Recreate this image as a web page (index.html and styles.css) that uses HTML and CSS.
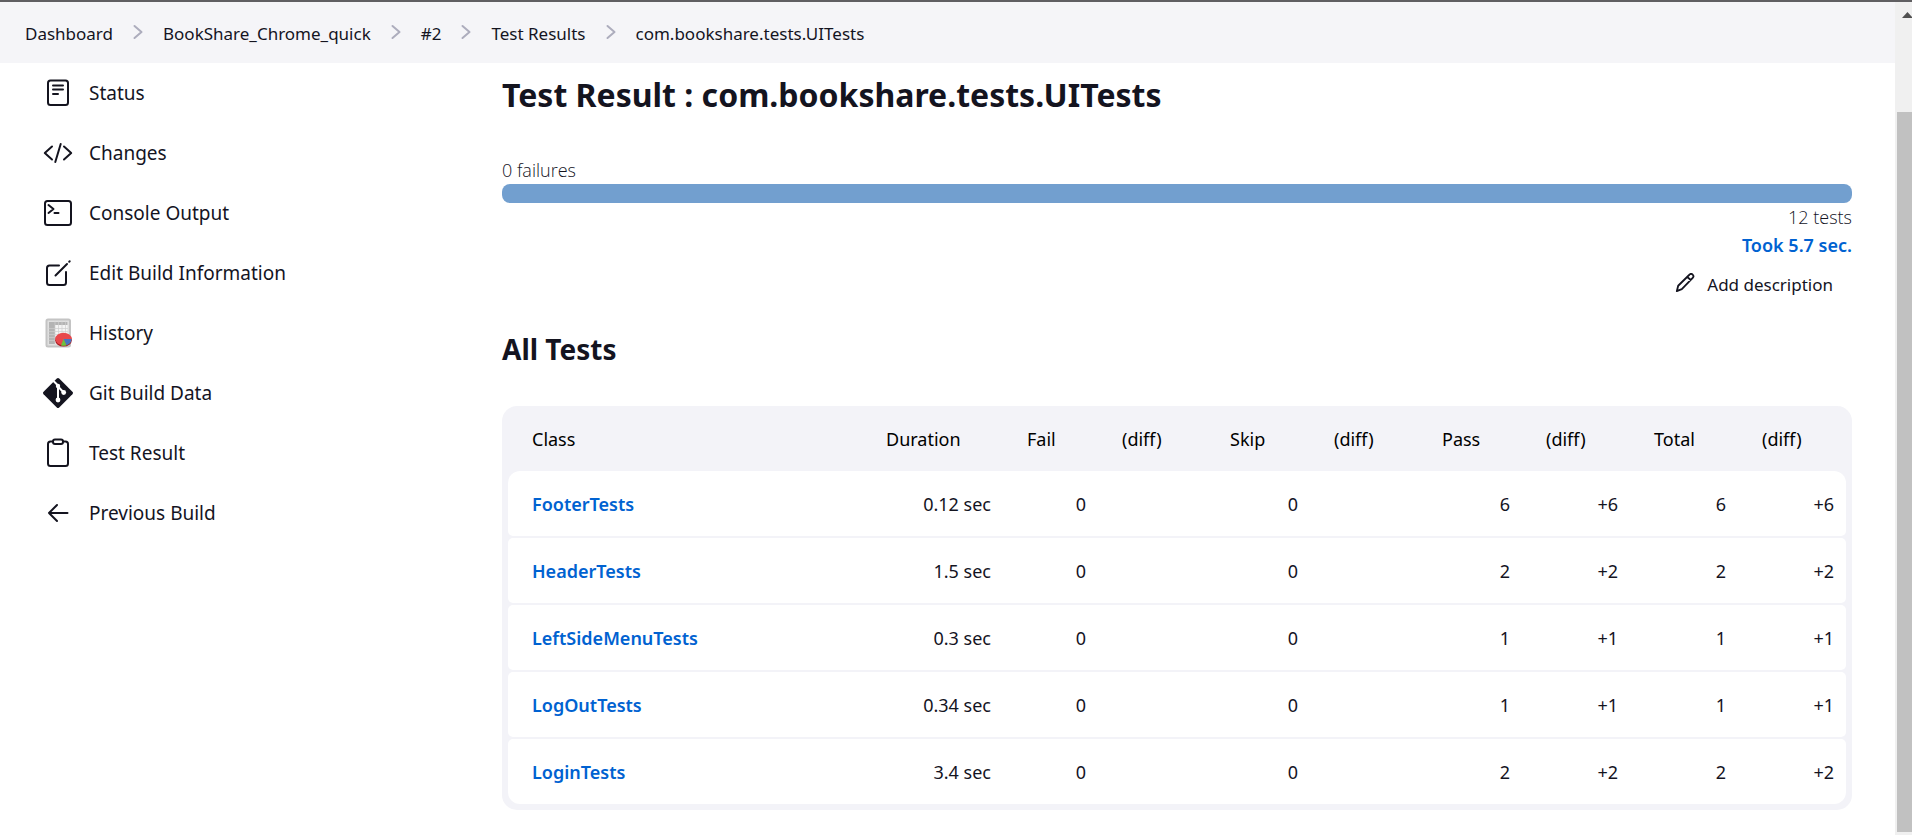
FILE: index.html
```html
<!DOCTYPE html>
<html lang="en">
<head>
<meta charset="utf-8">
<title>Test Result : com.bookshare.tests.UITests</title>
<link rel="stylesheet" href="styles.css">
</head>
<body>
<div class="page">
  <nav class="breadcrumbs" aria-label="Breadcrumb">
    <a href="#">Dashboard</a>
    <svg class="chevron" viewBox="0 0 10 16"><path d="M1.500 2 8.500 8l-7 6"/></svg>
    <a href="#">BookShare_Chrome_quick</a>
    <svg class="chevron" viewBox="0 0 10 16"><path d="M1.500 2 8.500 8l-7 6"/></svg>
    <a href="#">#2</a>
    <svg class="chevron" viewBox="0 0 10 16"><path d="M1.500 2 8.500 8l-7 6"/></svg>
    <a href="#">Test Results</a>
    <svg class="chevron" viewBox="0 0 10 16"><path d="M1.500 2 8.500 8l-7 6"/></svg>
    <a href="#">com.bookshare.tests.UITests</a>
  </nav>
  <div class="columns">
    <nav class="tasks" aria-label="Build">
      <a href="#"><svg class="icon" viewBox="0 0 30 30"><rect x="5" y="2.500" width="20" height="24.500" rx="2.500"/><path d="M10 7.500h10M10 11.500h10M10 16h5"/></svg>Status</a>
      <a href="#"><svg class="icon" viewBox="0 0 30 30"><path d="M9 8.500 1.800 15 9 21.500M21 8.500l7.200 6.500-7.200 6.500M17.700 6l-5.400 18"/></svg>Changes</a>
      <a href="#"><svg class="icon" viewBox="0 0 30 30"><rect x="2" y="3" width="26" height="24" rx="2.500"/><path d="m5.500 7 5 4-5 4M11.500 15h4"/></svg>Console Output</a>
      <a href="#"><svg class="icon" viewBox="0 0 30 30"><path d="M16 7.500H6.500a2.500 2.500 0 0 0-2.500 2.500v14.500A2.500 2.500 0 0 0 6.500 27h14a2.500 2.500 0 0 0 2.500-2.500V14M12.500 17.500 24 6M26.200 3.800l.5-.5"/></svg>Edit Build Information</a>
      <a href="#"><svg class="icon icon-color" viewBox="0 0 30 30">
        <rect x="3.500" y="1.500" width="23.500" height="27" rx="1.500" fill="#e0e0e0" stroke="#c4c4c4"/>
        <rect x="6" y="4" width="18.500" height="22" fill="#f4f4f4"/>
        <path d="M6 4h18.500v3H6zM6 7h6v19H6z" fill="#b4b4b4"/>
        <path d="M6 10.500h18.500M6 13.500h18.500M6 16.500h18.500M6 19.500h18.500M6 22.500h18.500M12 4v22M15.500 4v22M19 4v22M22.500 4v22" stroke="#cfcfcf" stroke-width=".7"/>
        <ellipse cx="20.500" cy="22.300" rx="8.300" ry="6.300" fill="#a61c22"/>
        <ellipse cx="20.500" cy="21" rx="8.200" ry="6.200" fill="#e8484c"/>
        <path d="M20.500 21h8.200c0 3-2 5.200-5.200 6.200z" fill="#4874c0"/>
        <path d="m20.500 21 3 6.500a11 11 0 0 1-5.500 0z" fill="#6cc33e"/>
      </svg>History</a>
      <a href="#"><svg class="icon" viewBox="0 0 30 30"><path class="solid" d="M13.800.6a1.700 1.700 0 0 1 2.400 0l13.200 13.200a1.700 1.700 0 0 1 0 2.400L16.200 29.400a1.700 1.700 0 0 1-2.400 0L.6 16.200a1.700 1.700 0 0 1 0-2.400z"/><path class="cut" d="M11 3.500l4 4v14.500M15 8.500l5.500 5.700"/><circle class="cut-dot" cx="15" cy="8" r="2.200"/><circle class="cut-dot" cx="15" cy="22" r="2.400"/><circle class="cut-dot" cx="20.700" cy="14.500" r="2.400"/></svg>Git Build Data</a>
      <a href="#"><svg class="icon" viewBox="0 0 30 30"><path d="M10 3.500H7.500A2.500 2.500 0 0 0 5 6v19.500A2.500 2.500 0 0 0 7.500 28h15a2.500 2.500 0 0 0 2.500-2.500V6a2.500 2.500 0 0 0-2.500-2.500H20"/><rect x="10" y="1.500" width="10" height="4.500" rx="2"/></svg>Test Result</a>
      <a href="#"><svg class="icon" viewBox="0 0 30 30"><path d="M14 7 6 15l8 8M6 15h18.500"/></svg>Previous Build</a>
    </nav>
    <main class="main">
      <h1>Test Result : com.bookshare.tests.UITests</h1>
      <div class="failures">0 failures</div>
      <div class="result-bar"></div>
      <div class="summary">
        <div class="total">12 tests</div>
        <a class="took" href="#">Took 5.7 sec.</a>
        <button class="describe" type="button"><svg class="pencil" viewBox="0 0 22 22"><path d="M2 20l1.500-6L15.800 1.900a2.400 2.400 0 0 1 3.700 3.500L7.500 17.800zM13.500 4.200l4 3.800"/></svg>Add description</button>
      </div>
      <h2>All Tests</h2>
      <table class="tests">
        <colgroup><col><col class="c-duration"><col class="c-fail"><col class="c-diff"><col class="c-count"><col class="c-diff"><col class="c-count"><col class="c-diff"><col class="c-diff"><col class="c-diff"></colgroup>
        <thead><tr><th>Class</th><th>Duration</th><th>Fail</th><th>(diff)</th><th>Skip</th><th>(diff)</th><th>Pass</th><th>(diff)</th><th>Total</th><th>(diff)</th></tr></thead>
        <tbody>
          <tr><td><a href="#">FooterTests</a></td><td>0.12 sec</td><td>0</td><td></td><td>0</td><td></td><td>6</td><td>+6</td><td>6</td><td>+6</td></tr>
          <tr><td><a href="#">HeaderTests</a></td><td>1.5 sec</td><td>0</td><td></td><td>0</td><td></td><td>2</td><td>+2</td><td>2</td><td>+2</td></tr>
          <tr><td><a href="#">LeftSideMenuTests</a></td><td>0.3 sec</td><td>0</td><td></td><td>0</td><td></td><td>1</td><td>+1</td><td>1</td><td>+1</td></tr>
          <tr><td><a href="#">LogOutTests</a></td><td>0.34 sec</td><td>0</td><td></td><td>0</td><td></td><td>1</td><td>+1</td><td>1</td><td>+1</td></tr>
          <tr><td><a href="#">LoginTests</a></td><td>3.4 sec</td><td>0</td><td></td><td>0</td><td></td><td>2</td><td>+2</td><td>2</td><td>+2</td></tr>
        </tbody>
      </table>
    </main>
  </div>
</div>
<div class="scrollbar" aria-hidden="true">
  <svg class="scroll-up" viewBox="0 0 11 6"><path d="M0 6 5.500 0 11 6z"/></svg>
  <div class="scroll-thumb"></div>
</div>
</body>
</html>
```
FILE: styles.css
```css
* { box-sizing: border-box; }

body {
  margin: 0;
  min-height: 100vh;
  display: flex;
  border-top: 2px solid #605f62;
  background: #fff;
  color: #14141f;
  font: 400 18px/24px "Noto Sans", "Open Sans", sans-serif;
}

a { color: inherit; text-decoration: none; }

.page { flex: 1; min-width: 0; }

.breadcrumbs {
  display: flex;
  align-items: center;
  gap: 20px;
  height: 61px;
  padding: 2px 25px 0;
  background: #f5f5f8;
  font-size: 17px;
}

.chevron {
  width: 10px;
  height: 16px;
  margin-bottom: 3px;
  fill: none;
  stroke: #adadbd;
  stroke-width: 2;
  stroke-linecap: round;
  stroke-linejoin: round;
}

.columns { display: flex; }

.tasks {
  flex: 0 0 459px;
  display: flex;
  flex-direction: column;
  padding-left: 43px;
  font-size: 19px;
}

.tasks a {
  display: flex;
  align-items: center;
  gap: 16px;
  height: 60px;
}

.icon {
  width: 30px;
  height: 30px;
  fill: none;
  stroke: #14141f;
  stroke-width: 2;
  stroke-linecap: round;
  stroke-linejoin: round;
}

.icon-color { stroke: none; }
.solid { fill: #14141f; stroke: none; }
.cut { stroke: #fff; }
.cut-dot { fill: #fff; stroke: none; }

.main {
  flex: 1;
  min-width: 0;
  padding: 8px 43px 24px 43px;
}

h1 {
  margin: 0 0 39px;
  font-size: 32px;
  line-height: 48px;
  font-weight: 700;
}

.failures, .total { font-family: "Open Sans", sans-serif; font-weight: 300; }

.result-bar {
  height: 19px;
  margin-top: 2px;
  border-radius: 8px;
  background: #729fcf;
}

.summary {
  display: flex;
  flex-direction: column;
  align-items: flex-end;
  gap: 4px;
  padding-top: 2px;
}

.took, .tests a { color: #0062d1; font-weight: 600; }

.describe {
  display: flex;
  align-items: center;
  gap: 12px;
  height: 48px;
  padding: 0 19px;
  border: 0;
  background: none;
  color: inherit;
  font: inherit;
  font-size: 17px;
}

.pencil {
  width: 20px;
  height: 20px;
  margin-bottom: 5px;
  fill: none;
  stroke: #14141f;
  stroke-width: 2;
  stroke-linejoin: round;
}

h2 {
  margin: 20px 0 37px;
  font-size: 28px;
  line-height: 40px;
  font-weight: 700;
}

.tests {
  width: 100%;
  table-layout: fixed;
  border-collapse: separate;
  border-spacing: 0 2px;
  border: solid #f3f3f8;
  border-width: 0 6px 4px;
  border-radius: 15px;
  background: #f3f3f8;
}

.c-duration { width: 141px; }
.c-fail { width: 95px; }
.c-count { width: 104px; }
.c-diff { width: 108px; }

.tests th {
  height: 61px;
  padding: 0 0 0 24px;
  font-weight: 400;
  text-align: left;
  color: #000;
}

.tests td {
  height: 65px;
  padding: 0 12px;
  background: #fff;
  text-align: right;
}

.tests td:first-child {
  padding-left: 24px;
  text-align: left;
  border-radius: 5px 0 0 5px;
}

.tests td:last-child { border-radius: 0 5px 5px 0; }
.tests tbody tr:first-child td:first-child { border-top-left-radius: 12px; }
.tests tbody tr:first-child td:last-child { border-top-right-radius: 12px; }
.tests tbody tr:last-child td:first-child { border-bottom-left-radius: 12px; }
.tests tbody tr:last-child td:last-child { border-bottom-right-radius: 12px; }

.scrollbar {
  flex: 0 0 17px;
  display: flex;
  flex-direction: column;
  align-items: flex-end;
  padding: 10px 0 3px 2px;
  background: #f0f0f0;
}

.scroll-up { width: 11px; height: 6px; fill: #505050; margin-right: -1px; }
.scroll-thumb { flex: 1; width: 100%; margin-top: 94px; background: #c1c1c1; }
```
